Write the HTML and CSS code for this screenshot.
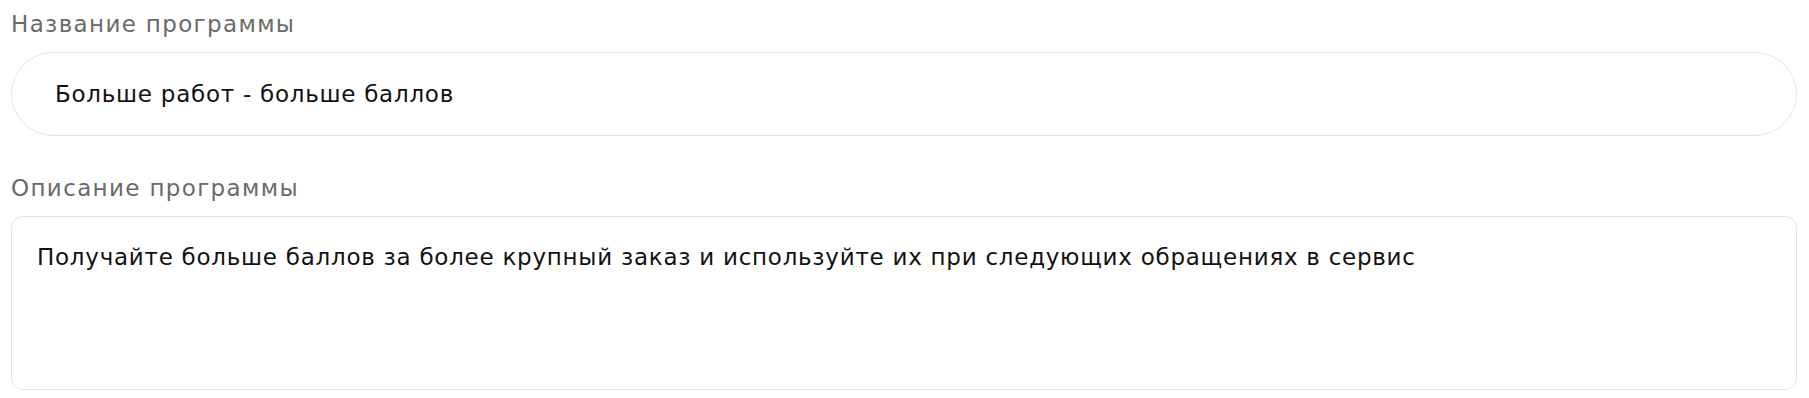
FILE: index.html
```html
<!DOCTYPE html>
<html lang="ru">
<head>
<meta charset="utf-8">
<title>Программа лояльности</title>
<link rel="stylesheet" href="styles.css">
</head>
<body>
<form class="form">
  <div class="field">
    <label class="field-label" for="name">Название программы</label>
    <input class="field-input" id="name" type="text" value="Больше работ - больше баллов">
  </div>
  <div class="field">
    <label class="field-label" for="desc">Описание программы</label>
    <textarea class="field-textarea" id="desc">Получайте больше баллов за более крупный заказ и используйте их при следующих обращениях в сервис</textarea>
  </div>
</form>
</body>
</html>
```

FILE: styles.css
```css
html, body {
  margin: 0;
  padding: 0;
  background: #ffffff;
}

body {
  font-family: "DejaVu Sans", "Noto Sans", sans-serif;
}

.form {
  display: flex;
  flex-direction: column;
  gap: 37px;
  padding: 9px 12px 0 11px;
}

.field {
  display: flex;
  flex-direction: column;
}

.field-label {
  font-size: 23px;
  line-height: 30px;
  letter-spacing: 1.35px;
  color: #6a6a6a;
  margin-bottom: 13px;
}

.field-input,
.field-textarea {
  box-sizing: border-box;
  width: 100%;
  margin: 0;
  border: 1px solid #e4e4e4;
  background: #ffffff;
  color: #111111;
  font-family: inherit;
  font-size: 23px;
  line-height: 30px;
  letter-spacing: 0.74px;
  outline: none;
}

.field-input {
  height: 84px;
  padding: 0 43px;
  border-radius: 42px;
}

.field-textarea {
  height: 174px;
  padding: 25px 25px;
  border-radius: 12px;
  resize: none;
  display: block;
}
```
